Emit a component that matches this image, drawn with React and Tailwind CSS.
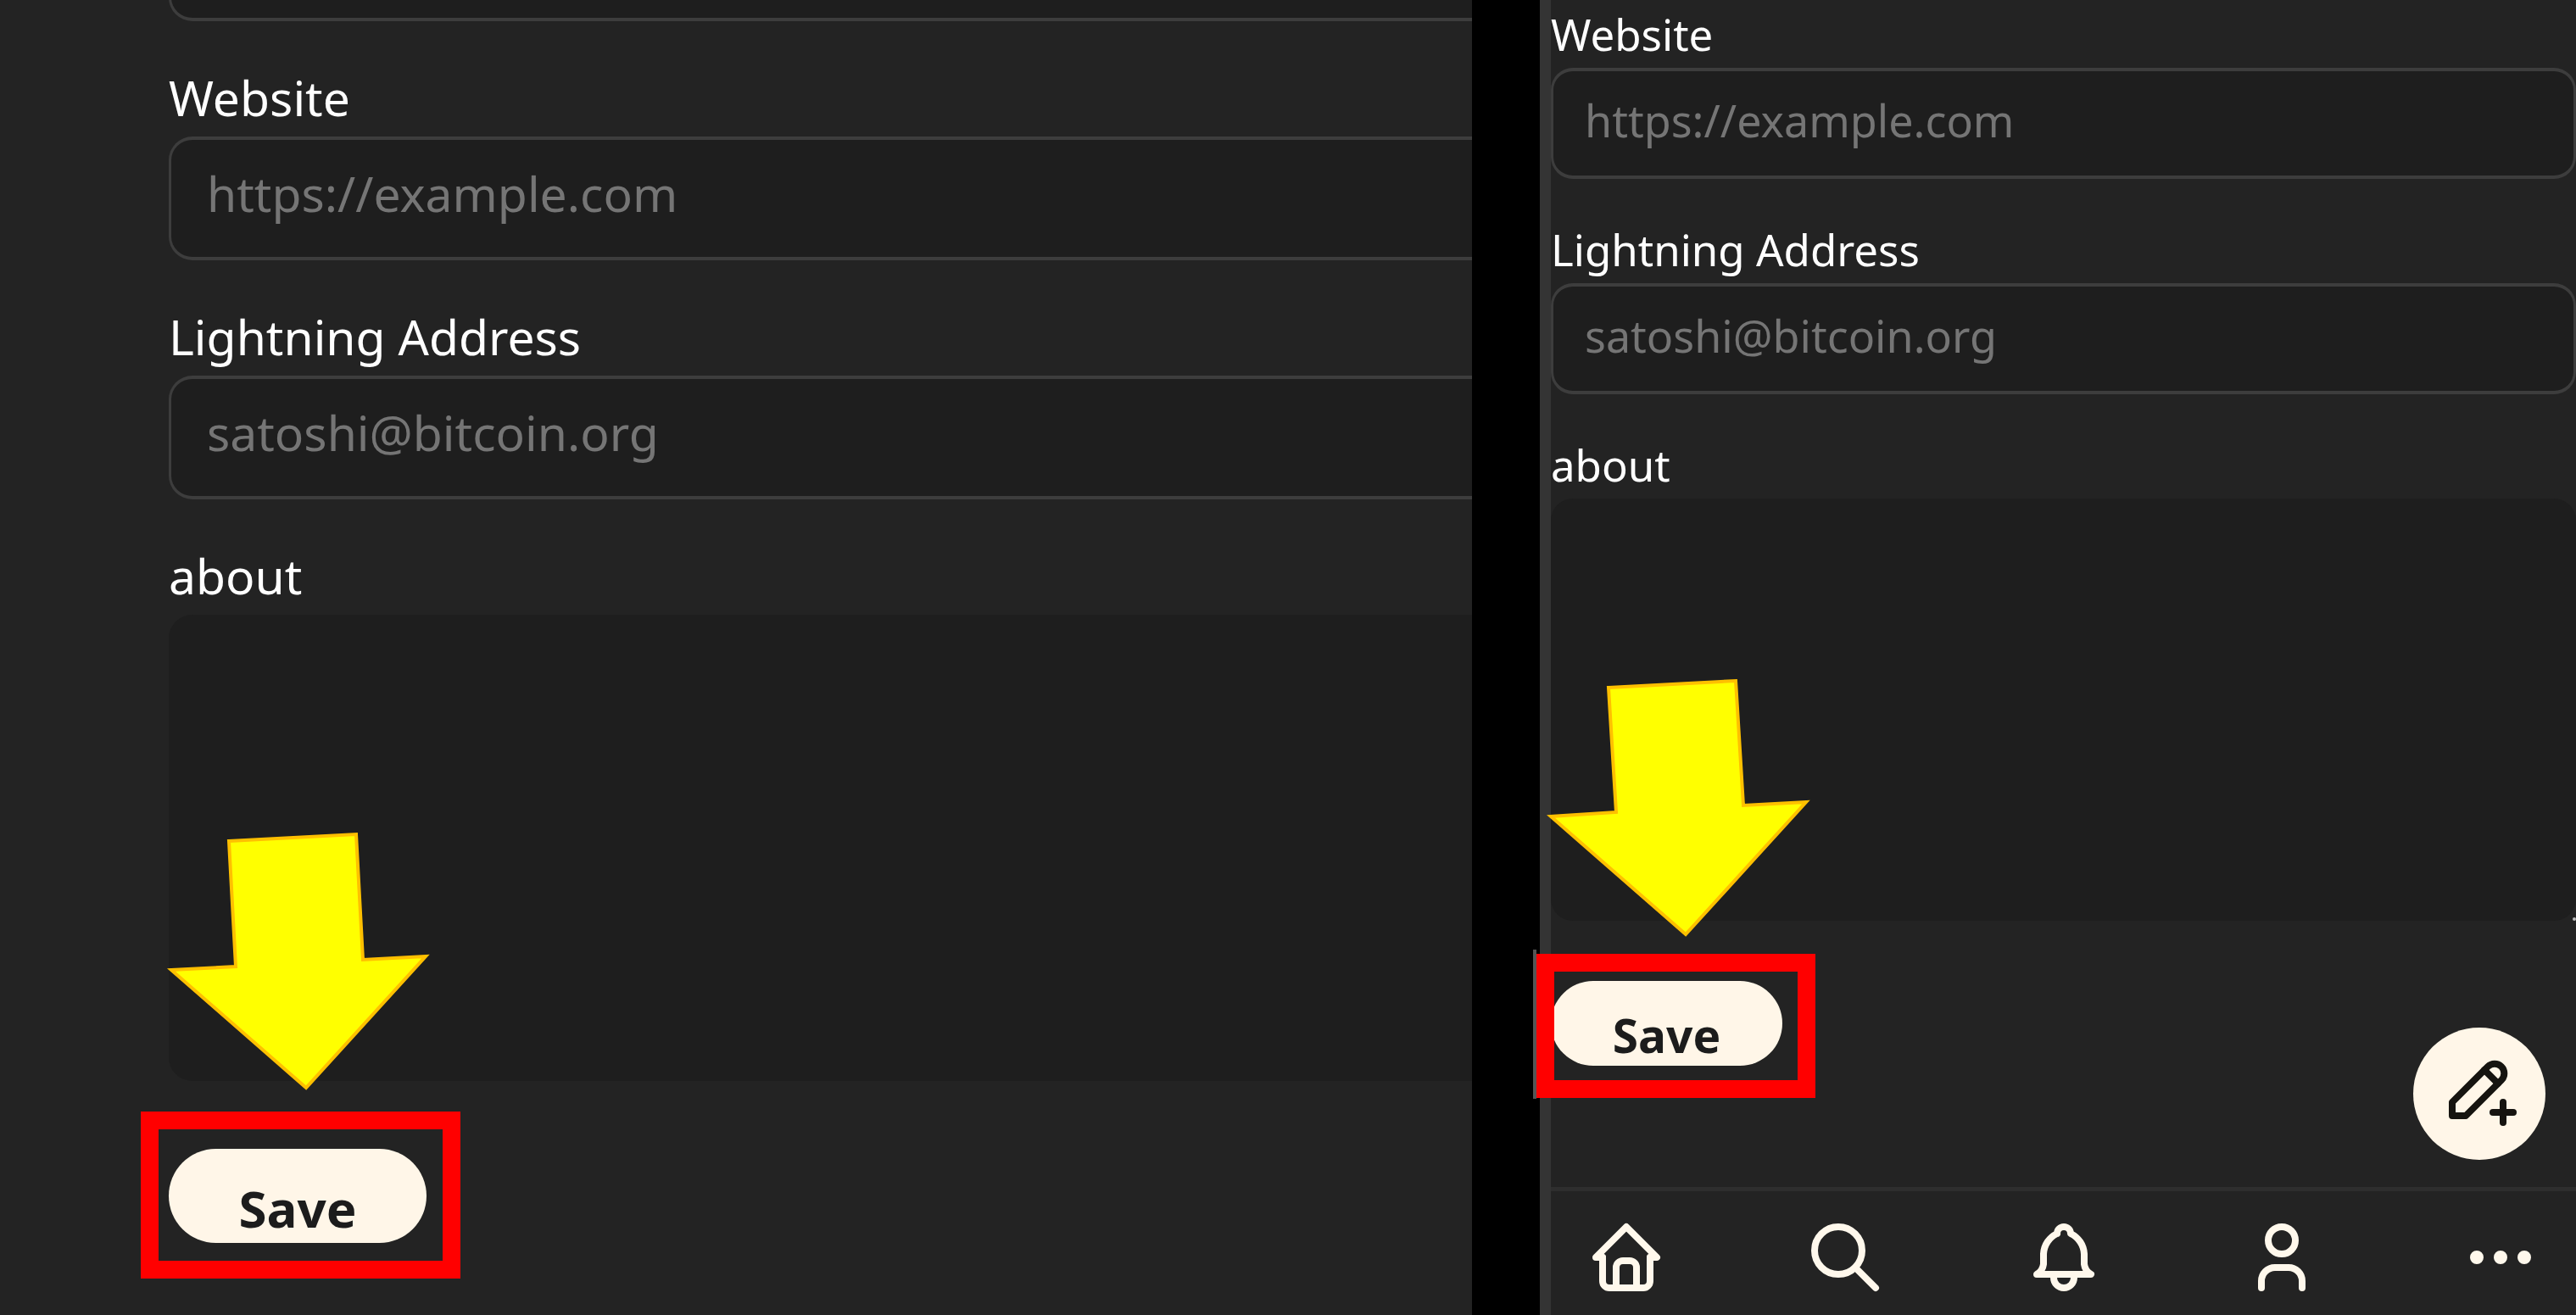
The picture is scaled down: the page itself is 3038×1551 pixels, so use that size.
const icons = {
  Home: ["M5 12H3l9-9 9 9h-2", "M5 12v7a2 2 0 0 0 2 2h10a2 2 0 0 0 2-2v-7", "M9 21v-6a2 2 0 0 1 2-2h2a2 2 0 0 1 2 2v6"],
  Search: ["M3 10a7 7 0 1 0 14 0a7 7 0 1 0-14 0", "M21 21l-6-6"],
  Notifications: ["M10 5a2 2 0 1 1 4 0a7 7 0 0 1 4 6v3a4 4 0 0 0 2 3H4a4 4 0 0 0 2-3v-3a7 7 0 0 1 4-6", "M9 17v1a3 3 0 0 0 6 0v-1"],
  Profile: ["M8 7a4 4 0 1 0 8 0a4 4 0 0 0-8 0", "M6 21v-2a4 4 0 0 1 4-4h4a4 4 0 0 1 4 4v2"],
  More: ["M4 12a1 1 0 1 0 2 0a1 1 0 1 0-2 0", "M11 12a1 1 0 1 0 2 0a1 1 0 1 0-2 0", "M18 12a1 1 0 1 0 2 0a1 1 0 1 0-2 0"],
};
const pencil = ["M4 20h4l10.5-10.5a2.828 2.828 0 1 0-4-4L4 16v4", "M13.5 6.5l4 4", "M16 19h6", "M19 16v6"];

function Icon({ paths }) {
  return (
    <svg className="size-24" viewBox="0 0 24 24" fill="none" stroke="currentColor" strokeWidth="2" strokeLinecap="round" strokeLinejoin="round" aria-hidden="true">
      {paths.map((d) => <path key={d} d={d} />)}
    </svg>
  );
}

function Arrow({ points, className }) {
  return (
    <svg className={"pointer-events-none absolute h-[320px] w-[330px] " + className} viewBox="0 0 330 320" aria-hidden="true">
      <polygon points={points} fill="#ffff00" stroke="#ffc000" strokeWidth="4" strokeMiterlimit="10" />
    </svg>
  );
}

function Field({ id, label, placeholder, labelClass, inputClass }) {
  return (
    <div className="flex flex-col">
      <label htmlFor={id} className={labelClass}>{label}</label>
      <input id={id} type="text" placeholder={placeholder} className={"w-full border-[#3d3d3d] bg-[#1e1e1e] outline-none placeholder:text-[#757575] placeholder:opacity-100 " + inputClass} />
    </div>
  );
}

function WidePanel() {
  const label = "self-start leading-[92px]";
  const input = "h-[146px] rounded-l-[28px] border-y-4 border-l-3 pb-3 pl-[42px]";
  return (
    <section className="overflow-hidden bg-[#232323] pl-[199px] font-['Noto_Sans',sans-serif] text-[57px] text-white">
      <form className="-mt-[121px] flex flex-col gap-11" onSubmit={(e) => e.preventDefault()}>
        <input type="text" aria-label="Picture" className={"w-full border-[#3d3d3d] bg-[#1e1e1e] outline-none " + input} />
        <Field id="wide-website" label="Website" placeholder="https://example.com" labelClass={label} inputClass={input} />
        <Field id="wide-lightning" label="Lightning Address" placeholder="satoshi@bitcoin.org" labelClass={label} inputClass={input} />
        <div className="flex flex-col">
          <label htmlFor="wide-about" className={label}>about</label>
          <textarea id="wide-about" className="h-[550px] w-full resize-none rounded-l-[28px] bg-[#1e1e1e] outline-none" />
        </div>
        <div className="relative mt-9 self-start">
          <button type="submit" className="block h-[111px] w-[304px] rounded-full bg-[#fff6e8] pt-7 text-[60px] leading-[80px] font-bold text-[#1c1c1c]">Save</button>
          <div className="pointer-events-none absolute -top-11 -left-[33px] h-[197px] w-[377px] border-[21px] border-[#ff0000]" />
          <Arrow className="-top-[384px] -left-[9px]" points="80,21 230,13 238,161 312,157 171,312 12,173 88,169" />
        </div>
      </form>
    </section>
  );
}

function NarrowPanel() {
  const label = "self-start leading-[80px]";
  const input = "h-[131px] rounded-[26px] border-x-3 border-y-4 pb-2 pl-[37px] text-[52px]";
  return (
    <section className="relative flex flex-col border-l-13 border-[#343434] bg-[#232323] font-['Noto_Sans',sans-serif] text-[51px] text-white">
      <form className="flex flex-col gap-[43px]" onSubmit={(e) => e.preventDefault()}>
        <Field id="narrow-website" label="Website" placeholder="https://example.com" labelClass={label} inputClass={input} />
        <Field id="narrow-lightning" label="Lightning Address" placeholder="satoshi@bitcoin.org" labelClass={label} inputClass={input} />
        <div className="relative flex flex-col">
          <label htmlFor="narrow-about" className={label}>about</label>
          <textarea id="narrow-about" className="h-[498px] w-full resize-none rounded-[26px] bg-[#1e1e1e] outline-none" />
          <div className="absolute right-0 bottom-0 size-1 rounded-full bg-[#bbbbbb]" />
        </div>
        <div className="relative mt-7 self-start">
          <button type="submit" className="block h-[100px] w-[273px] rounded-full bg-[#fff6e8] pt-7 text-[55px] leading-[72px] font-bold text-[#1c1c1c]">Save</button>
          <div className="pointer-events-none absolute -top-[37px] -left-[21px] h-[176px] w-1 bg-[#555555]" />
          <div className="pointer-events-none absolute -top-8 -left-[17px] h-[170px] w-[329px] border-[21px] border-[#ff0000]" />
          <Arrow className="-top-[367px] -left-[9px]" points="77,21 227,13 236,160 310,156 168,312 9,173 86,168" />
        </div>
      </form>
      <button type="button" aria-label="New post" className="absolute right-9 bottom-[183px] flex size-[156px] items-center justify-center rounded-full bg-[#fff6e8] pb-3 text-[#161410]">
        <Icon paths={pencil} />
      </button>
      <nav className="mt-auto flex h-[151px] items-start justify-between border-t-5 border-[#2e2e2e] px-[41px] pt-[30px] text-[#fff8ec]">
        {Object.entries(icons).map(([name, paths]) => (
          <a key={name} href={"#" + name.toLowerCase()} aria-label={name}><Icon paths={paths} /></a>
        ))}
      </nav>
    </section>
  );
}

export default function App() {
  return (
    <main className="grid h-screen grid-cols-[1736fr_80px_1222fr] overflow-hidden bg-black">
      <WidePanel />
      <div />
      <NarrowPanel />
    </main>
  );
}
